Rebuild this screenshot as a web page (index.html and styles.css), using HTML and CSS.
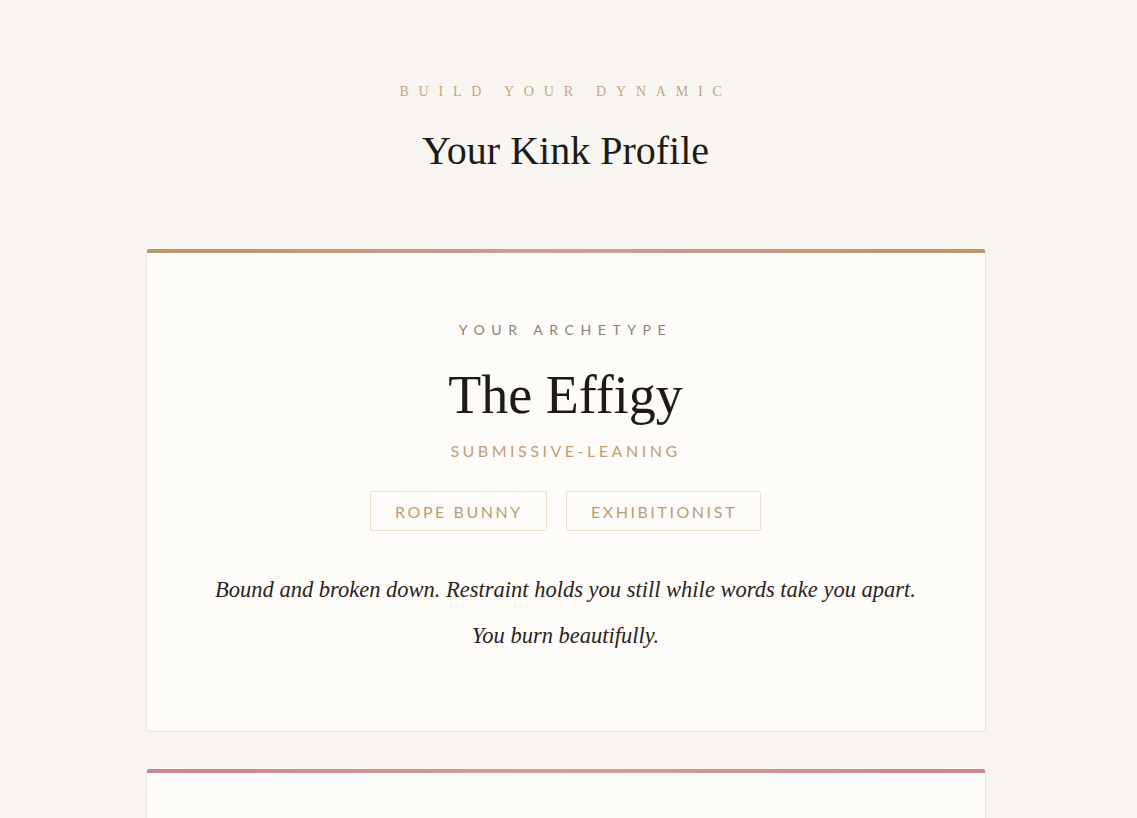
FILE: index.html
```html
<!DOCTYPE html>
<html lang="en">
<head>
<meta charset="utf-8">
<title>Your Kink Profile</title>
<link rel="stylesheet" href="styles.css">
</head>
<body>
<div class="page">
  <header class="intro">
    <div class="eyebrow">Build your dynamic</div>
    <h1 class="title">Your Kink Profile</h1>
  </header>

  <section class="card card-gold">
    <div class="card-label">Your archetype</div>
    <h2 class="archetype">The Effigy</h2>
    <div class="leaning">Submissive-leaning</div>
    <div class="tags">
      <span class="tag">Rope bunny</span>
      <span class="tag">Exhibitionist</span>
    </div>
    <p class="desc">Bound and broken down. Restraint holds you still while words take you apart.<br>You burn beautifully.</p>
  </section>

  <section class="card card-rose">
    <div class="card-spacer"></div>
  </section>
</div>
</body>
</html>
```

FILE: styles.css
```css
* { box-sizing: border-box; }
html, body { margin: 0; padding: 0; }
body {
  background: #f9f6f1;
  font-family: "Liberation Serif", "Times New Roman", serif;
  color: #1f1b19;
  height: 818px;
  overflow: hidden;
}
.page {
  width: 840px;
  margin: 0 auto;
  position: relative;
  left: -3px;
  padding-top: 84px;
}
.intro { text-align: center; }
.eyebrow {
  font-family: "Liberation Serif", serif;
  font-size: 14px;
  letter-spacing: 0.7em;
  text-transform: uppercase;
  color: #c6a47c;
  line-height: 16px;
}
.title {
  margin: 27px 0 0;
  font-weight: 400;
  font-size: 40px;
  line-height: 48px;
  color: #1d1a18;
}
.card {
  background: #fdfcf8;
  border: 1px solid #ebe5dc;
  border-radius: 3px;
  overflow: hidden;
  text-align: center;
}
.card-gold {
  margin-top: 74px;
  border-top: 0;
  padding: 0 40px 72px;
  background-image: linear-gradient(90deg, #b8966a 0%, #d39c98 50%, #b8966a 100%);
  background-size: 100% 4px;
  background-repeat: no-repeat;
  background-color: #fdfcf8;
}
.card-label {
  margin-top: 73px;
  font-family: "Lato", "Open Sans", sans-serif;
  font-size: 14px;
  letter-spacing: 0.47em;
  text-transform: uppercase;
  color: #8c827a;
  line-height: 16px;
}
.archetype {
  margin: 27px 0 0;
  font-weight: 400;
  font-size: 54px;
  line-height: 60px;
  color: #1d1a18;
}
.leaning {
  margin-top: 17px;
  font-family: "Lato", "Open Sans", sans-serif;
  font-size: 16px;
  letter-spacing: 0.22em;
  text-transform: uppercase;
  color: #c29e76;
  line-height: 18px;
}
.tags {
  margin-top: 31px;
  display: flex;
  justify-content: center;
  gap: 19px;
}
.tag {
  display: inline-flex;
  align-items: center;
  height: 40px;
  padding: 0 23px 0 24px;
  border: 1px solid #eadfcd;
  border-radius: 2px;
  font-family: "Lato", "Open Sans", sans-serif;
  font-size: 16px;
  letter-spacing: 0.16em;
  text-transform: uppercase;
  color: #bf9d74;
}
.desc {
  margin: 36px 0 0;
  font-style: italic;
  font-size: 22.5px;
  line-height: 46px;
  color: #2a2320;
}
.card-rose {
  margin-top: 37px;
  height: 60px;
  border-top: 0;
  background-image: linear-gradient(90deg, #c8868e 0%, #d69d9c 50%, #c8868e 100%);
  background-size: 100% 4px;
  background-repeat: no-repeat;
  background-color: #fdfcf8;
}
```
